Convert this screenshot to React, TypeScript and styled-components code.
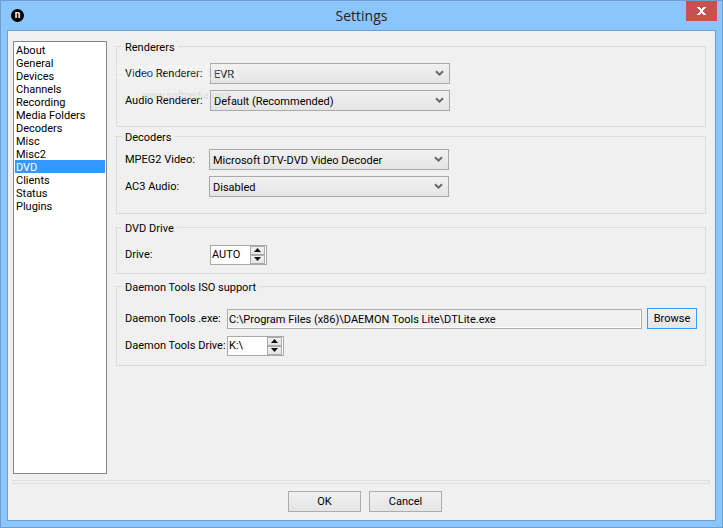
import React from 'react';
import styled, { createGlobalStyle } from 'styled-components';

const GlobalStyle = createGlobalStyle`
    html, body {
        margin: 0;
        padding: 0;
        background: #8ac6fb;
    }
    body {
        font-family: Roboto, 'Liberation Sans', Arial, sans-serif;
        font-size: 11px;
        color: #000;
    }
`;

const pages = [
    'About',
    'General',
    'Devices',
    'Channels',
    'Recording',
    'Media Folders',
    'Decoders',
    'Misc',
    'Misc2',
    'DVD',
    'Clients',
    'Status',
    'Plugins',
];

const Select = ({ value }: { value: string }) => (
    <Combo>
        <ComboText>{value}</ComboText>
        <svg width="9" height="7" viewBox="0 0 9 7">
            <path d="M1 1.2 L4.5 4.6 L8 1.2" fill="none" stroke="#666" strokeWidth="2" />
        </svg>
    </Combo>
);

const Spinner = ({ value }: { value: string }) => (
    <SpinBox>
        <SpinValue>{value}</SpinValue>
        <SpinButtons>
            <SpinButton>
                <svg width="7" height="4" viewBox="0 0 7 4">
                    <path d="M3.5 0 L7 4 L0 4 Z" fill="#111" />
                </svg>
            </SpinButton>
            <SpinButton>
                <svg width="7" height="4" viewBox="0 0 7 4">
                    <path d="M0 0 L7 0 L3.5 4 Z" fill="#111" />
                </svg>
            </SpinButton>
        </SpinButtons>
    </SpinBox>
);

const App = () => (
    <>
        <GlobalStyle />
        <Window>
            <TitleBar>
                <AppIcon>n</AppIcon>
                <Title>Settings</Title>
                <CloseButton>
                    <svg width="9" height="8" viewBox="0 0 9 8" shapeRendering="crispEdges">
                        <path
                            d="M0 0h3v1h1v1h1v-1h1v-1h3v1h-1v1h-1v1h-1v2h1v1h1v1h1v1h-3v-1h-1v-1h-1v1h-1v1h-3v-1h1v-1h1v-1h1v-2h-1v-1h-1v-1h-1z"
                            fill="#fff"
                        />
                    </svg>
                </CloseButton>
            </TitleBar>
            <Body>
                <Main>
                    <PageList>
                        {pages.map((page) => (
                            <PageItem key={page} selected={page === 'DVD'}>
                                {page}
                            </PageItem>
                        ))}
                    </PageList>
                    <Groups>
                        <Group $height={88} $gap={2}>
                            <Legend>Renderers</Legend>
                            <Rows $top={10}>
                                <Row>
                                    <Label $width={85}>Video Renderer:</Label>
                                    <Select value="EVR" />
                                </Row>
                                <Row>
                                    <Label $width={85}>Audio Renderer:</Label>
                                    <Select value="Default (Recommended)" />
                                </Row>
                            </Rows>
                            <Watermark>
                                <WatermarkLogo>SOFTPEDIA</WatermarkLogo>
                                <WatermarkUrl>www.softpedia.com</WatermarkUrl>
                            </Watermark>
                        </Group>
                        <Group $height={85} $gap={6}>
                            <Legend>Decoders</Legend>
                            <Rows $top={6}>
                                <Row>
                                    <Label $width={84}>MPEG2 Video:</Label>
                                    <Select value="Microsoft DTV-DVD Video Decoder" />
                                </Row>
                                <Row>
                                    <Label $width={84}>AC3 Audio:</Label>
                                    <Select value="Disabled" />
                                </Row>
                            </Rows>
                        </Group>
                        <Group $height={54} $gap={5}>
                            <Legend>DVD Drive</Legend>
                            <Rows $top={10}>
                                <Row>
                                    <Label $width={85}>Drive:</Label>
                                    <Spinner value="AUTO" />
                                </Row>
                            </Rows>
                        </Group>
                        <Group $height={87} $gap={0}>
                            <Legend>Daemon Tools ISO support</Legend>
                            <Rows $top={15}>
                                <Row>
                                    <Label $width={102}>Daemon Tools .exe:</Label>
                                    <PathInput>C:\Program Files (x86)\DAEMON Tools Lite\DTLite.exe</PathInput>
                                    <BrowseButton>Browse</BrowseButton>
                                </Row>
                                <Row>
                                    <Label $width={102}>Daemon Tools Drive:</Label>
                                    <Spinner value="K:\" />
                                </Row>
                            </Rows>
                        </Group>
                    </Groups>
                </Main>
                <Divider />
                <Footer>
                    <DialogButton>OK</DialogButton>
                    <DialogButton>Cancel</DialogButton>
                </Footer>
            </Body>
        </Window>
    </>
);

const Window = styled.div`
    width: 723px;
    height: 528px;
    box-sizing: border-box;
    display: flex;
    flex-direction: column;
    padding: 0 6px 6px;
    background: #8ac6fb;
    border: 1px solid #6f9fcf;
    overflow: hidden;
`;
const TitleBar = styled.div`
    height: 29px;
    flex: none;
    position: relative;
    display: flex;
    align-items: center;
    justify-content: center;
`;
const AppIcon = styled.span`
    position: absolute;
    left: 4px;
    top: 8px;
    width: 13px;
    height: 13px;
    border-radius: 50%;
    background: #000;
    color: #fff;
    font-size: 10px;
    font-weight: bold;
    line-height: 11px;
    text-align: center;
`;
const Title = styled.span`
    font-family: 'Open Sans', sans-serif;
    font-size: 14px;
    color: #222;
`;
const CloseButton = styled.div`
    position: absolute;
    top: 0;
    right: -1px;
    width: 31px;
    height: 20px;
    background: #c75050;
    display: flex;
    align-items: center;
    justify-content: center;
`;
const Body = styled.div`
    flex: 1;
    min-height: 0;
    display: flex;
    flex-direction: column;
    background: #f0f0f0;
    border: 1px solid #6f9fcf;
`;
const Main = styled.div`
    display: flex;
    align-items: flex-start;
    padding: 8px 0 0 5px;
`;
const PageList = styled.ul`
    list-style: none;
    box-sizing: border-box;
    width: 94px;
    height: 433px;
    margin: 2px 9px 0 0;
    padding: 1px;
    background: #fff;
    border: 1px solid #828790;
    color: #000;
`;
const PageItem = styled.li<{ selected?: boolean }>`
    height: 13px;
    line-height: 15px;
    padding-left: 1px;
    white-space: nowrap;
    background: ${(props) => (props.selected ? '#3399ff' : 'transparent')};
    color: ${(props) => (props.selected ? '#fff' : '#000')};
`;
const Groups = styled.div`
    position: relative;
    width: 590px;
    display: flex;
    flex-direction: column;
`;
const Group = styled.fieldset<{ $height: number; $gap: number }>`
    box-sizing: border-box;
    height: ${(props) => props.$height}px;
    min-width: 0;
    margin: 0 0 ${(props) => props.$gap}px;
    padding: 0;
    border: 1px solid #dcdcdc;
`;
const Legend = styled.legend`
    margin-left: 5px;
    padding: 0 3px;
    height: 14px;
    line-height: 18px;
`;
const Rows = styled.div<{ $top: number }>`
    display: flex;
    flex-direction: column;
    gap: 6px;
    padding: ${(props) => props.$top}px 0 0 8px;
`;
const Row = styled.div`
    display: flex;
    align-items: center;
    height: 21px;
`;
const Label = styled.span<{ $width: number }>`
    width: ${(props) => props.$width}px;
    flex: none;
    white-space: nowrap;
`;
const Combo = styled.div`
    box-sizing: border-box;
    width: 240px;
    height: 21px;
    display: flex;
    align-items: center;
    justify-content: space-between;
    padding: 0 5px 0 3px;
    border: 1px solid #a9a9a9;
    background: linear-gradient(#f1f1f1, #e5e5e5);
`;
const ComboText = styled.span`
    padding-top: 2px;
`;
const SpinBox = styled.div`
    box-sizing: border-box;
    width: 57px;
    height: 20px;
    display: flex;
    align-items: center;
    justify-content: space-between;
    background: #fff;
    border: 1px solid #a9a9a9;
`;
const SpinValue = styled.span`
    padding: 0 0 1px 1px;
`;
const SpinButtons = styled.div`
    width: 15px;
    height: 18px;
    display: flex;
    flex-direction: column;
    margin-right: 1px;
`;
const SpinButton = styled.div`
    box-sizing: border-box;
    flex: 1;
    display: flex;
    align-items: center;
    justify-content: center;
    border: 1px solid #acacac;
    background: linear-gradient(#f0f0f0, #e5e5e5);
`;
const PathInput = styled.div`
    box-sizing: border-box;
    width: 415px;
    height: 20px;
    display: flex;
    align-items: center;
    padding: 2px 0 0 1px;
    border: 1px solid #acacac;
    background: #f0f0f0;
    box-shadow: inset -1px -1px 0 #fff;
    white-space: nowrap;
`;
const BrowseButton = styled.div`
    box-sizing: border-box;
    width: 50px;
    height: 21px;
    margin-left: 5px;
    display: flex;
    align-items: center;
    justify-content: center;
    border: 1px solid #3399ff;
    background: linear-gradient(#f1f1f1, #e5e5e5);
`;
const Divider = styled.div`
    box-sizing: border-box;
    height: 4px;
    margin: 6px 5px 0;
    border: 1px solid #e0e0e0;
`;
const Footer = styled.div`
    display: flex;
    justify-content: center;
    gap: 8px;
    padding: 7px 0 0 7px;
`;
const DialogButton = styled.div`
    box-sizing: border-box;
    width: 73px;
    height: 21px;
    display: flex;
    align-items: center;
    justify-content: center;
    border: 1px solid #acacac;
    background: linear-gradient(#f0f0f0, #e5e5e5);
`;
const Watermark = styled.div`
    position: absolute;
    left: -1px;
    top: 24px;
    pointer-events: none;
`;
const WatermarkLogo = styled.div`
    font-family: 'Liberation Sans', sans-serif;
    font-size: 22px;
    font-weight: bold;
    line-height: 20px;
    color: #fff;
    opacity: 0.3;
`;
const WatermarkUrl = styled.div`
    margin: 7px 0 0 27px;
    font-size: 10px;
    color: #c4c4c4;
    opacity: 0.45;
`;

export default App;
